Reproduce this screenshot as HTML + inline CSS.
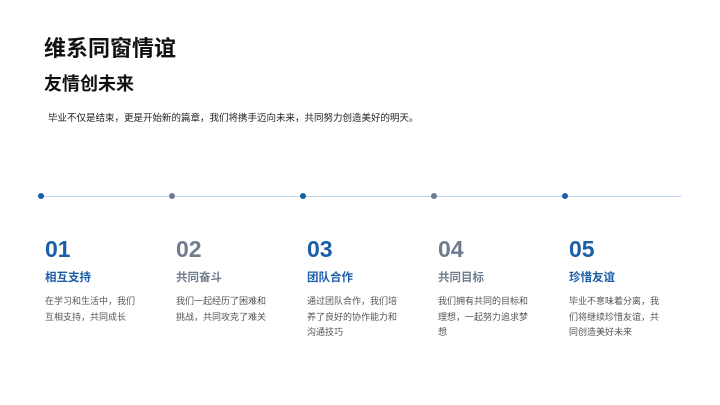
<!DOCTYPE html>
<html><head><meta charset="utf-8"><style>
body{margin:0;width:720px;height:405px;background:#fff;font-family:"Liberation Sans","Noto Sans CJK SC",sans-serif;position:relative;overflow:hidden}
.a{position:absolute;white-space:nowrap}
h1{position:absolute;left:44px;top:31px;margin:0;font-size:22px;font-weight:bold;color:#111}
h2{position:absolute;left:44px;top:70px;margin:0;font-size:18px;font-weight:bold;color:#111}
.p{left:48px;top:110px;font-size:9.5px;color:#222}
.line{position:absolute;left:41px;top:196px;width:640px;height:1px;background:#b9d1ec}
.dot{position:absolute;top:193px;width:6px;height:6px;border-radius:50%}
.col{position:absolute;top:235px;width:110px}
.n{font-size:23px;font-weight:bold;line-height:28px}
.t{font-size:11.5px;font-weight:bold;margin-top:7px;line-height:16px}
.d{font-size:9px;color:#555;line-height:15.5px;margin-top:8px}
.b{color:#1a5ea8}.g{color:#6f7c8e}
</style></head><body>
<h1>维系同窗情谊</h1>
<h2>友情创未来</h2>
<div class="a p">毕业不仅是结束，更是开始新的篇章，我们将携手迈向未来，共同努力创造美好的明天。</div>
<div class="line"></div>
<div class="dot" style="left:38px;background:#1a5ea8"></div>
<div class="dot" style="left:169px;background:#6f7c8e"></div>
<div class="dot" style="left:300px;background:#1a5ea8"></div>
<div class="dot" style="left:431px;background:#6f7c8e"></div>
<div class="dot" style="left:562px;background:#1a5ea8"></div>
<div class="col" style="left:45px"><div class="n b">01</div><div class="t b">相互支持</div><div class="d">在学习和生活中，我们<br>互相支持，共同成长</div></div>
<div class="col" style="left:176px"><div class="n g">02</div><div class="t g">共同奋斗</div><div class="d">我们一起经历了困难和<br>挑战，共同攻克了难关</div></div>
<div class="col" style="left:307px"><div class="n b">03</div><div class="t b">团队合作</div><div class="d">通过团队合作，我们培<br>养了良好的协作能力和<br>沟通技巧</div></div>
<div class="col" style="left:438px"><div class="n g">04</div><div class="t g">共同目标</div><div class="d">我们拥有共同的目标和<br>理想，一起努力追求梦<br>想</div></div>
<div class="col" style="left:569px"><div class="n b">05</div><div class="t b">珍惜友谊</div><div class="d">毕业不意味着分离，我<br>们将继续珍惜友谊，共<br>同创造美好未来</div></div>
</body></html>
